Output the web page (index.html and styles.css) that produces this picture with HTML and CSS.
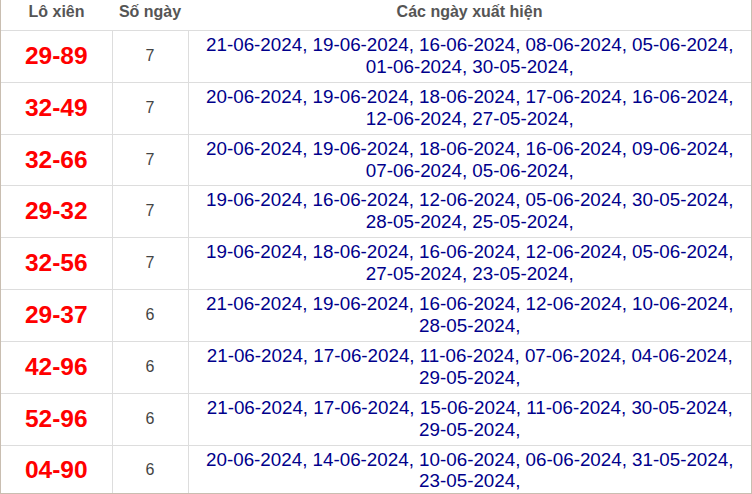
FILE: index.html
```html
<!DOCTYPE html>
<html lang="vi">
<head>
<meta charset="utf-8">
<title>Lô xiên</title>
<link rel="stylesheet" href="styles.css">
</head>
<body>
<div class="frame">
<table class="lx">
<colgroup><col class="c1"><col class="c2"><col class="c3"></colgroup>
<thead>
<tr><th>Lô xiên</th><th>Số ngày</th><th>Các ngày xuất hiện</th></tr>
</thead>
<tbody>
<tr><td class="pair">29-89</td><td class="cnt">7</td><td class="dates">21-06-2024, 19-06-2024, 16-06-2024, 08-06-2024, 05-06-2024, 01-06-2024, 30-05-2024,</td></tr>
<tr><td class="pair">32-49</td><td class="cnt">7</td><td class="dates">20-06-2024, 19-06-2024, 18-06-2024, 17-06-2024, 16-06-2024, 12-06-2024, 27-05-2024,</td></tr>
<tr><td class="pair">32-66</td><td class="cnt">7</td><td class="dates">20-06-2024, 19-06-2024, 18-06-2024, 16-06-2024, 09-06-2024, 07-06-2024, 05-06-2024,</td></tr>
<tr><td class="pair">29-32</td><td class="cnt">7</td><td class="dates">19-06-2024, 16-06-2024, 12-06-2024, 05-06-2024, 30-05-2024, 28-05-2024, 25-05-2024,</td></tr>
<tr><td class="pair">32-56</td><td class="cnt">7</td><td class="dates">19-06-2024, 18-06-2024, 16-06-2024, 12-06-2024, 05-06-2024, 27-05-2024, 23-05-2024,</td></tr>
<tr><td class="pair">29-37</td><td class="cnt">6</td><td class="dates">21-06-2024, 19-06-2024, 16-06-2024, 12-06-2024, 10-06-2024, 28-05-2024,</td></tr>
<tr><td class="pair">42-96</td><td class="cnt">6</td><td class="dates">21-06-2024, 17-06-2024, 11-06-2024, 07-06-2024, 04-06-2024, 29-05-2024,</td></tr>
<tr><td class="pair">52-96</td><td class="cnt">6</td><td class="dates">21-06-2024, 17-06-2024, 15-06-2024, 11-06-2024, 30-05-2024, 29-05-2024,</td></tr>
<tr><td class="pair">04-90</td><td class="cnt">6</td><td class="dates">20-06-2024, 14-06-2024, 10-06-2024, 06-06-2024, 31-05-2024, 23-05-2024,</td></tr>
</tbody>
</table>
</div>
</body>
</html>
```
FILE: styles.css
```css
html, body {
  margin: 0;
  padding: 0;
  background: #fff;
}
body {
  font-family: "Liberation Sans", Arial, sans-serif;
}
.frame {
  width: 752px;
  height: 494px;
  box-sizing: border-box;
  border-left: 1px solid #c9beb1;
  border-right: 1px solid #c9beb1;
  border-bottom: 1px solid #c9beb1;
  overflow: hidden;
}
.lx {
  width: 750px;
  border-collapse: collapse;
  table-layout: fixed;
}
.c1 { width: 111px; }
.c2 { width: 76px; }
.lx th {
  font-size: 16px;
  line-height: 18px;
  font-weight: bold;
  color: #555;
  padding: 3px 4px 9px;
  text-align: center;
}
.lx td {
  border-top: 1px solid #ddd;
  text-align: center;
  vertical-align: middle;
  padding: 3px 4px 4px;
  height: 43.8px;
}
.lx td + td {
  border-left: 1px solid #ddd;
}
.pair {
  color: #ff0000;
  font-weight: bold;
  font-size: 24.5px;
}
.cnt {
  color: #444;
  font-size: 16px;
}
.dates {
  color: #00008b;
  font-size: 18.8px;
  line-height: 21.9px;
}
```
